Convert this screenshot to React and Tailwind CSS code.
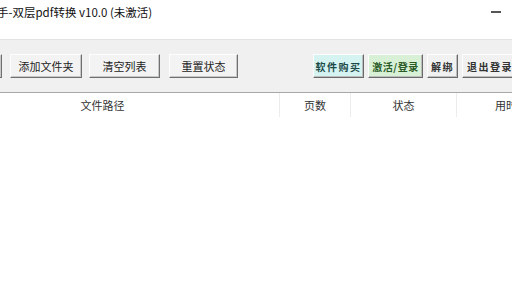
export default function App() {
  const font = { fontFamily: '"Microsoft YaHei", "Noto Sans CJK SC", "Noto Sans", sans-serif' };
  const btn =
    "h-[24px] shrink-0 flex items-center justify-center text-[11px] text-[#222] bg-[#f3f3f3] border border-t-[#fdfdfd] border-l-[#fdfdfd] border-b-[#707070] border-r-[#707070] shadow-[inset_-1px_-1px_0_#c8c8c8] whitespace-nowrap";
  const rbtn =
    "h-[24px] shrink-0 flex items-center justify-center text-[10px] font-semibold whitespace-nowrap border border-t-[#fdfdfd] border-l-[#fdfdfd] border-b-[#6a6a6a] border-r-[#6a6a6a] shadow-[inset_-1px_-1px_0_#bdbdbd]";
  return (
    <div className="w-[512px] h-[288px] overflow-hidden bg-white flex flex-col" style={font}>
      {/* title bar */}
      <div className="h-[39px] shrink-0 flex items-start bg-white">
        <div className="mt-[4px] -ml-[3px] text-[11.5px] leading-[16px] text-[#111] whitespace-nowrap">
          手-双层pdf转换 v10.0 (未激活)
        </div>
        <div className="ml-auto mr-[11px] mt-[11px] w-[10px] h-[1.5px] bg-[#555]" />
      </div>
      {/* toolbar */}
      <div className="h-[54px] shrink-0 bg-[#f0f0f0] border-t border-t-[#e4e4e4] border-b border-b-[#a8a8a8] flex items-start pt-[14px]">
        <div className={btn + " w-[62px] -ml-[60px]"} />
        <div className={btn + " w-[72px] ml-[8px]"}>添加文件夹</div>
        <div className={btn + " w-[71px] ml-[7px]"}>清空列表</div>
        <div className={btn + " w-[69px] ml-[9px]"}>重置状态</div>
        <div className={rbtn + " w-[51px] ml-[75px] bg-[#d4f3f1] text-[#1d4a48] tracking-[1.5px]"}>软件购买</div>
        <div className={rbtn + " w-[55px] ml-[4px] bg-[#d8f1d6] text-[#2a5a26] tracking-[0.5px]"}>激活/登录</div>
        <div className={rbtn + " w-[31px] ml-[4px] bg-[#f1f1f1] text-[#333] tracking-[1.5px]"}>解绑</div>
        <div className={rbtn + " w-[56px] ml-[4px] bg-[#f1f1f1] text-[#333] tracking-[1.5px] justify-start pl-[4px]"}>退出登录</div>
      </div>
      {/* header row */}
      <div className="h-[24px] shrink-0 flex text-[11px] text-[#333] bg-white">
        <div className="w-[354px] -ml-[74px] shrink-0 flex items-center justify-center border-r border-r-[#ececec]">文件路径</div>
        <div className="w-[71px] shrink-0 flex items-center justify-center border-r border-r-[#ececec]">页数</div>
        <div className="w-[106px] shrink-0 flex items-center justify-center border-r border-r-[#ececec]">状态</div>
        <div className="w-[98px] shrink-0 flex items-center justify-center">用时</div>
      </div>
      <div className="flex-1 bg-white" />
    </div>
  );
}
